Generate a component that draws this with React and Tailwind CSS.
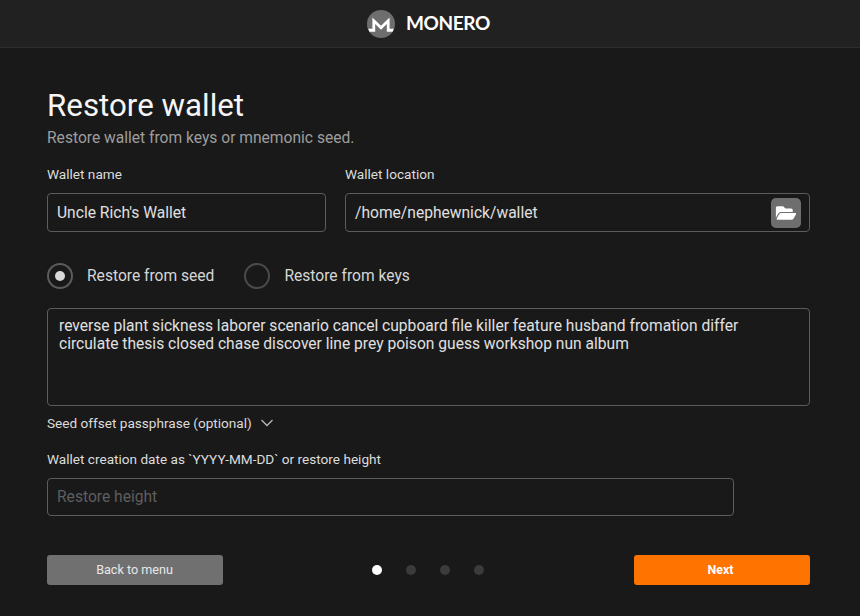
import React from "react";

const Logo = () => (
  <svg width="28" height="28" viewBox="0 0 28 28">
    <circle cx="14" cy="14" r="14" fill="#6e6e6e" />
    <path d="M1.2 18.8 H5.4 V7.4 L14 15.8 L22.6 7.4 V18.8 H26.8 L25.6 21.8 H19.8 V14 L14 19.8 L8.2 14 V21.8 H2.4 Z" fill="#fff" />
  </svg>
);

const Field = ({ label, className, children }) => (
  <div className={className}>
    <div className="text-[13.6px] leading-[16px] font-normal text-[#dcdcdc] mb-[11px]">{label}</div>
    {children}
  </div>
);

const inputBox = "border border-[#5c5c5c] rounded-[4px] flex items-center pl-[9px] text-[15.6px]";

export default function App() {
  return (
    <div className="w-[860px] h-[616px] overflow-hidden bg-[#191919] text-white" style={{ fontFamily: "Roboto, 'Liberation Sans', sans-serif" }}>
      <header className="h-[48px] bg-[#212121] border-b border-[#2e2e2e] flex items-center justify-center gap-[11px] pr-[3px]">
        <Logo />
        <span className="text-[19px] font-bold tracking-[-0.4px] text-white" style={{ fontFamily: "Lato, sans-serif" }}>MONERO</span>
      </header>
      <main className="w-[763px] ml-[47px] pt-[38px]">
        <h1 className="text-[31.3px] leading-[40px] font-normal text-[#f5f5f5]">Restore wallet</h1>
        <p className="text-[15.6px] leading-[20px] text-[#9e9e9e] mt-[2px]">Restore wallet from keys or mnemonic seed.</p>
        <div className="flex gap-[19px] mt-[18px]">
          <Field label="Wallet name" className="w-[279px]">
            <div className={inputBox + " h-[39px] pt-[2px] text-[#e0e0e0]"}>Uncle Rich's Wallet</div>
          </Field>
          <Field label="Wallet location" className="w-[465px]">
            <div className={inputBox + " h-[39px] text-[#e0e0e0] justify-between pr-[8px]"}>
              <span className="mt-[2px]">/home/nephewnick/wallet</span>
              <span className="w-[30px] h-[30px] rounded-[5px] bg-[#6e6e6e] flex items-center justify-center">
                <svg width="22" height="18" viewBox="0 0 576 512" fill="#fff">
                  <path d="M572.694 292.093L500.27 416.248A63.997 63.997 0 0 1 444.989 448H45.025c-18.523 0-30.064-20.093-20.731-36.093l72.424-124.155A64 64 0 0 1 152 256h399.964c18.523 0 30.064 20.093 20.73 36.093zM152 224h328v-48c0-26.51-21.49-48-48-48H272l-64-64H48C21.49 64 0 85.49 0 112v278.046l69.077-118.418C86.214 242.25 117.989 224 152 224z" />
                </svg>
              </span>
            </div>
          </Field>
        </div>
        <div className="flex items-center mt-[31px] h-[26px] text-[15.6px] text-[#d6d6d6]">
          <span className="w-[26px] h-[26px] rounded-full border-2 border-[#5c5c5c] flex items-center justify-center">
            <span className="w-[10px] h-[10px] rounded-full bg-[#d8d8d8]" />
          </span>
          <span className="ml-[14px] mt-[1px]">Restore from seed</span>
          <span className="w-[26px] h-[26px] rounded-full border-2 border-[#4a4a4a] ml-[30px]" />
          <span className="ml-[14px] mt-[1px]">Restore from keys</span>
        </div>
        <div className="mt-[19px] h-[98px] border border-[#5c5c5c] rounded-[4px] pl-[11px] pr-[60px] pt-[8px] text-[15.6px] leading-[18px] text-[#e0e0e0]">
          reverse plant sickness laborer scenario cancel cupboard file killer feature husband fromation differ circulate thesis closed chase discover line prey poison guess workshop nun album
        </div>
        <div className="flex items-center gap-[8px] mt-[9px] h-[16px] text-[13.6px] text-[#dcdcdc]">
          <span>Seed offset passphrase (optional)</span>
          <svg width="14" height="8" viewBox="0 0 14 8" fill="none" stroke="#b8b8b8" strokeWidth="1.3"><path d="M1.5 1 L7 6.5 L12.5 1" /></svg>
        </div>
        <Field label="Wallet creation date as `YYYY-MM-DD` or restore height" className="mt-[20px]">
          <div className={inputBox + " h-[38px] pt-[2px] w-[687px] text-[#5e5e5e]"}>Restore height</div>
        </Field>
        <div className="flex items-center justify-between mt-[39px]">
          <button className="w-[176px] h-[30px] rounded-[3px] bg-[#707070] pt-[1px] pr-[1px] text-[12.6px] text-[#e8e8e8]">Back to menu</button>
          <div className="flex gap-[24px] mr-[2px]">
            <span className="w-[10px] h-[10px] rounded-full bg-white" />
            <span className="w-[10px] h-[10px] rounded-full bg-[#3b3b3b]" />
            <span className="w-[10px] h-[10px] rounded-full bg-[#3b3b3b]" />
            <span className="w-[10px] h-[10px] rounded-full bg-[#3b3b3b]" />
          </div>
          <button className="w-[176px] h-[30px] rounded-[3px] bg-[#ff7300] pt-[1px] pr-[3px] text-[12.4px] font-bold text-white">Next</button>
        </div>
      </main>
    </div>
  );
}
